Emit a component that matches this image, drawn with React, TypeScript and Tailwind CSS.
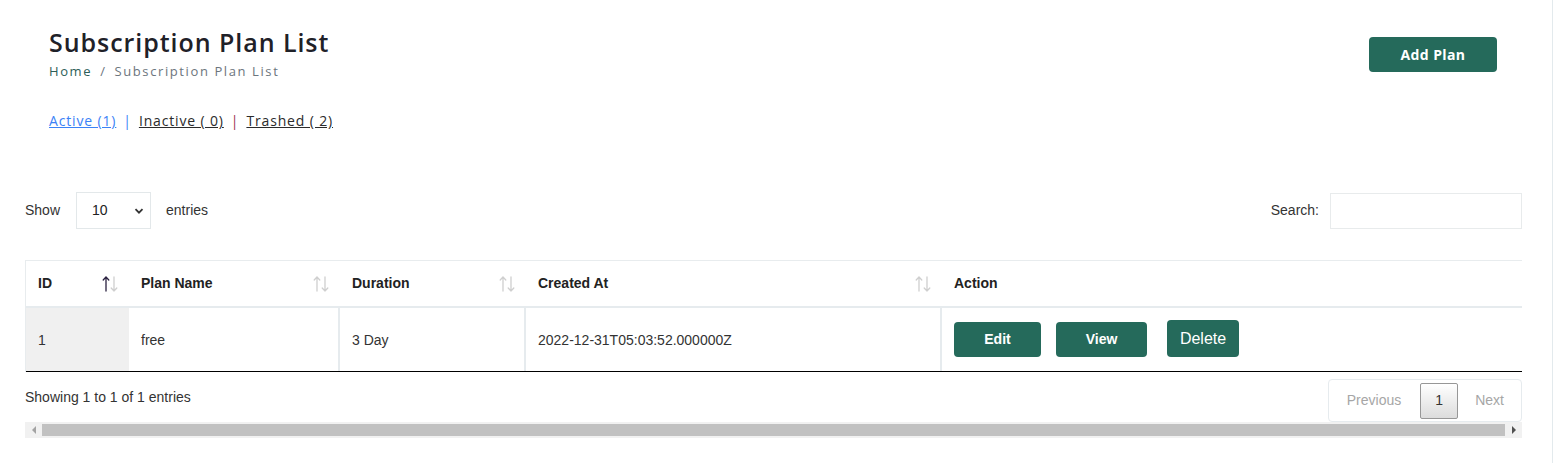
import * as React from "react";

const rows = [
  {
    id: 1,
    name: "free",
    duration: "3 Day",
    createdAt: "2022-12-31T05:03:52.000000Z",
  },
];

const SortIcon = ({ active }: { active?: boolean }) => (
  <svg width="18" height="18" viewBox="0 0 18 18" className="shrink-0">
    <g fill="none" strokeWidth="1.3" strokeLinecap="round" strokeLinejoin="round">
      <path d="M5 16V2M2.2 5L5 2l2.8 3" stroke={active ? "#2a2140" : "#cfcfcf"} />
      <path d="M13 2v14M10.2 13l2.8 3 2.8-3" stroke="#cfcfcf" />
    </g>
  </svg>
);

const columns = [
  { key: "id", label: "ID", width: "w-[103px]", sort: true, active: true },
  { key: "name", label: "Plan Name", width: "w-[211px]", sort: true },
  { key: "duration", label: "Duration", width: "w-[186px]", sort: true },
  { key: "createdAt", label: "Created At", width: "w-[416px]", sort: true },
  { key: "action", label: "Action", width: "flex-1", sort: false },
];

const App = () => {
  return (
    <div className="h-[463px] w-full overflow-hidden border-r border-[#e3eaed] bg-white font-['Liberation_Sans',Arial,sans-serif] text-[14px] text-[#333]">
      {/* Page header */}
      <div className="flex justify-between pl-[49px] pr-[55px] pt-[28px]">
        <div>
          <h1 className="font-['Open_Sans',sans-serif] text-[25px] font-semibold leading-[28px] tracking-[0.95px] text-[#1f2128]">
            Subscription Plan List
          </h1>
          <div className="mt-[6px] flex items-center font-['Open_Sans',sans-serif] text-[13px] leading-[18px] tracking-[1.6px]">
            <span className="text-[#2c5e58]">Home</span>
            <span className="mx-[8px] text-[#6c757d]">/</span>
            <span className="text-[#6c757d]">Subscription Plan List</span>
          </div>
          <div className="mt-[31px] flex items-center font-['Open_Sans',sans-serif] text-[14px] leading-[20px] tracking-[0.85px]">
            <a className="text-[#3b82f6] underline">Active (1)</a>
            <span className="mx-[7px] text-[#3b82f6]">|</span>
            <a className="text-[#2b2b2b] underline">Inactive ( 0)</a>
            <span className="mx-[7px] text-[#9b3353]">|</span>
            <a className="text-[#2b2b2b] underline">Trashed ( 2)</a>
          </div>
        </div>
        <button className="mt-[9px] h-[35px] w-[128px] rounded-[4px] bg-[#256a5b] font-['Open_Sans',sans-serif] text-[14px] font-bold tracking-[0.4px] text-white">
          Add Plan
        </button>
      </div>

      <div className="pl-[25px] pr-[30px]">
        {/* Length + search */}
        <div className="mt-[61px] flex items-center justify-between">
          <div className="flex items-center">
            <span>Show</span>
            <div className="ml-[16px] flex h-[37px] w-[75px] items-center justify-between border border-[#e3e8ea] pl-[15px] pr-[6px] text-[#222]">
              <span>10</span>
              <svg width="10" height="10" viewBox="0 0 10 10">
                <path d="M1.5 3.2L5 6.7l3.5-3.5" fill="none" stroke="#333" strokeWidth="1.8" />
              </svg>
            </div>
            <span className="ml-[15px]">entries</span>
          </div>
          <div className="flex items-center">
            <span>Search:</span>
            <div className="ml-[11px] h-[36px] w-[192px] border border-[#e8ebec]" />
          </div>
        </div>

        {/* Table */}
        <div className="mt-[31px] border-l border-t border-[#e8ecee]">
          <div className="flex h-[47px] items-center border-b-2 border-[#e6ebee]">
            {columns.map((c) => (
              <div
                key={c.key}
                className={`${c.width} flex h-full items-center justify-between pl-[12px] pr-[10px] font-bold text-[#222]`}
              >
                <span>{c.label}</span>
                {c.sort && <SortIcon active={c.active} />}
              </div>
            ))}
          </div>
          {rows.map((r) => (
            <div key={r.id} className="flex h-[64px] border-b border-black">
              <div className="flex w-[103px] items-center bg-[#f0f0f0] pl-[12px] pt-[1px]">{r.id}</div>
              <div className="flex w-[211px] items-center border-r-2 border-[#e6ebee] pl-[12px] pt-[1px]">{r.name}</div>
              <div className="flex w-[186px] items-center border-r-2 border-[#e6ebee] pl-[12px] pt-[1px]">{r.duration}</div>
              <div className="flex w-[416px] items-center border-r-2 border-[#e6ebee] pl-[12px] pt-[1px]">{r.createdAt}</div>
              <div className="flex flex-1 items-center pl-[12px]">
                <button className="h-[35px] w-[87px] rounded-[4px] bg-[#256a5b] font-bold text-white">Edit</button>
                <button className="ml-[15px] h-[35px] w-[91px] rounded-[4px] bg-[#256a5b] font-bold text-white">View</button>
                <button className="ml-[20px] -mt-[2px] h-[37px] w-[72px] rounded-[4px] bg-[#256a5b] text-[16px] text-white">Delete</button>
              </div>
            </div>
          ))}
        </div>

        {/* Footer */}
        <div className="flex items-start justify-between pt-[7px]">
          <span className="mt-[8px]">Showing 1 to 1 of 1 entries</span>
          <div className="flex h-[43px] items-center rounded-[4px] border border-[#e6ebee] text-[#a6a6a6]">
            <span className="pl-[18px] pr-[19px]">Previous</span>
            <span className="flex h-[36px] w-[38px] items-center justify-center rounded-[2px] border border-[#979797] bg-gradient-to-b from-white to-[#dcdcdc] text-[#333]">
              1
            </span>
            <span className="px-[17px]">Next</span>
          </div>
        </div>

        {/* Horizontal scrollbar */}
        <div className="flex h-[16px] items-center bg-[#f1f1f1]">
          <div className="flex w-[17px] justify-center">
            <svg width="6" height="8" viewBox="0 0 6 8"><path d="M5 0v8L1 4z" fill="#a3a3a3" /></svg>
          </div>
          <div className="h-[12px] flex-1 bg-[#c1c1c1]" />
          <div className="flex w-[17px] justify-center">
            <svg width="6" height="8" viewBox="0 0 6 8"><path d="M1 0v8l4-4z" fill="#505050" /></svg>
          </div>
        </div>
      </div>
    </div>
  );
};

export default App;
